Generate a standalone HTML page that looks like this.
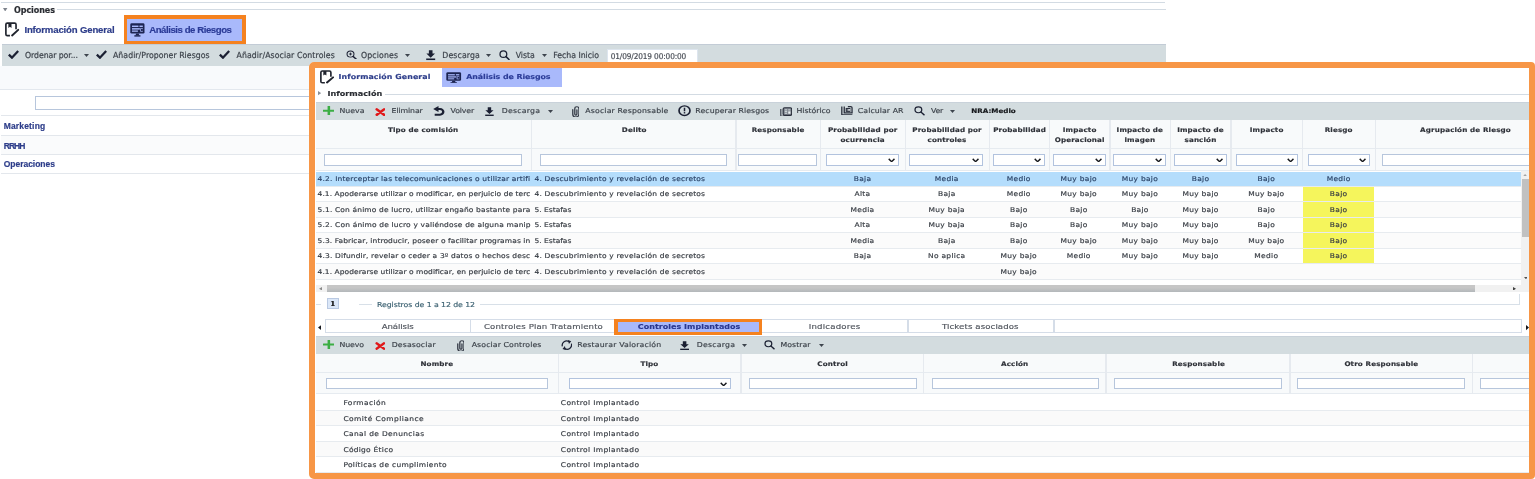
<!DOCTYPE html>
<html lang="es"><head><meta charset="utf-8"><title>Análisis de Riesgos</title><style>html,body{margin:0;padding:0;background:#fff}#r{position:relative;width:1535px;height:479px;overflow:hidden;background:#fff;will-change:transform}#r div,#r svg,#r span{position:absolute;display:block}#r span{white-space:nowrap;overflow:visible;-webkit-text-stroke:0.18px currentColor}#r span i{display:inline-block;width:0;height:0}</style></head><body><div id="r">
<div style="left:1.3px;top:1.5px;width:1164.2px;height:1.2px;background:#d3dbe3;"></div>
<div style="left:57px;top:9.2px;width:1108.5px;height:1.2px;background:#d3dbe3;"></div>
<svg style="left:3.3px;top:7.7px" width="4.4" height="3.5" viewBox="0 0 10 8" preserveAspectRatio="none"><path d="M0 0 H10 L5 8 Z" fill="#7d838c"/></svg>
<span style='left:14px;top:4px;height:13px;font:700 8px/13px "DejaVu Sans", "Liberation Sans", sans-serif;color:#2a2d33;letter-spacing:-0.06px;'>Opciones</span>
<svg style="left:5.4px;top:22px" width="14.2" height="14.6" viewBox="0 0 14.4 14.8" preserveAspectRatio="none"><path d="M11.2 7.4 V2.6 A1.5 1.5 0 0 0 9.7 1.1 H2.4 A1.5 1.5 0 0 0 0.9 2.6 V12.4 A1.5 1.5 0 0 0 2.4 13.9 H5" fill="none" stroke="#20242e" stroke-width="1.7"/><path d="M3.4 1 H6.6 V6 L5 4.8 L3.4 6 Z" fill="#20242e"/><path d="M7.2 13.6 L13.4 8" stroke="#20242e" stroke-width="2" stroke-linecap="round"/></svg>
<span style='left:24.4px;top:22px;height:15px;font:700 9.6px/15px "Liberation Sans", "DejaVu Sans", sans-serif;color:#2d3d8a;letter-spacing:-0.17px;'>Información General</span>
<div style="left:124px;top:15.2px;width:121.7px;height:28.6px;background:#f5821f;"></div>
<div style="left:127.4px;top:18.8px;width:114.8px;height:22px;background:#a9b9fb;"></div>
<svg style="left:130px;top:22.8px" width="14.8" height="13.8" viewBox="0 0 15 14" preserveAspectRatio="none"><rect x="0.3" y="0.3" width="14.4" height="10.4" rx="1.4" fill="#1c2452"/><rect x="2" y="2.6" width="6.6" height="1.5" fill="#a9b9fb"/><rect x="9.6" y="2.6" width="3.4" height="1.5" fill="#a9b9fb"/><rect x="2" y="5.2" width="8" height="1.5" fill="#a9b9fb"/><rect x="2" y="7.6" width="6" height="1.3" fill="#a9b9fb"/><rect x="10.4" y="5.2" width="2.6" height="3.6" fill="#a9b9fb"/><rect x="11.2" y="5.9" width="1.8" height="2.2" fill="#1c2452"/><path d="M6.2 10.6 H8.8 L9.4 12.6 H5.6 Z" fill="#1c2452"/><rect x="4.4" y="12.4" width="6.2" height="1.4" fill="#1c2452"/></svg>
<span style='left:149.2px;top:22px;height:15px;font:700 9.6px/15px "Liberation Sans", "DejaVu Sans", sans-serif;color:#2c3c98;letter-spacing:-0.44px;'>Análisis de Riesgos</span>
<div style="left:1.5px;top:44px;width:1164px;height:22.7px;background:#d3dcdf;border-top:1px solid #c3ccd6;border-bottom:1px solid #c7d0d6;box-sizing:border-box;"></div>
<svg style="left:8px;top:50px" width="11" height="9" viewBox="0 0 12 10" preserveAspectRatio="none"><path d="M0.9 5.2 L4.3 8.5 L11.1 1.2" fill="none" stroke="#1b2033" stroke-width="2.5" stroke-linecap="butt" stroke-linejoin="miter"/></svg>
<span style='left:25px;top:50px;height:12px;font:400 7.8px/12px "DejaVu Sans", "Liberation Sans", sans-serif;color:#3c424a;letter-spacing:-0.08px;transform:scaleY(1.07);transform-origin:0 8px;'>Ordenar por...</span>
<svg style="left:83.9px;top:54.3px" width="5" height="3" viewBox="0 0 10 6" preserveAspectRatio="none"><path d="M0 0 H10 L5 6 Z" fill="#3d444d"/></svg>
<svg style="left:96px;top:50px" width="11" height="9" viewBox="0 0 12 10" preserveAspectRatio="none"><path d="M0.9 5.2 L4.3 8.5 L11.1 1.2" fill="none" stroke="#1b2033" stroke-width="2.5" stroke-linecap="butt" stroke-linejoin="miter"/></svg>
<span style='left:113px;top:50px;height:12px;font:400 7.8px/12px "DejaVu Sans", "Liberation Sans", sans-serif;color:#3c424a;letter-spacing:0.04px;transform:scaleY(1.07);transform-origin:0 8px;'>Añadir/Proponer Riesgos</span>
<svg style="left:218.7px;top:50px" width="11" height="9" viewBox="0 0 12 10" preserveAspectRatio="none"><path d="M0.9 5.2 L4.3 8.5 L11.1 1.2" fill="none" stroke="#1b2033" stroke-width="2.5" stroke-linecap="butt" stroke-linejoin="miter"/></svg>
<span style='left:236.5px;top:50px;height:12px;font:400 7.8px/12px "DejaVu Sans", "Liberation Sans", sans-serif;color:#3c424a;letter-spacing:0.09px;transform:scaleY(1.07);transform-origin:0 8px;'>Añadir/Asociar Controles</span>
<svg style="left:345.7px;top:49.5px" width="11.1" height="9.9" viewBox="0 0 16 16" preserveAspectRatio="none"><circle cx="6.5" cy="6.5" r="5" fill="none" stroke="#1b2033" stroke-width="1.5"/><path d="M10.4 10.4 L14.8 14.8" stroke="#1b2033" stroke-width="2.3" stroke-linecap="round"/><path d="M4.2 6.5 H8.8 M6.5 4.2 V8.8" stroke="#1b2033" stroke-width="1.3"/></svg>
<span style='left:361px;top:50px;height:12px;font:400 7.8px/12px "DejaVu Sans", "Liberation Sans", sans-serif;color:#3c424a;letter-spacing:0.12px;transform:scaleY(1.07);transform-origin:0 8px;'>Opciones</span>
<svg style="left:404.5px;top:54.1px" width="5" height="3" viewBox="0 0 10 6" preserveAspectRatio="none"><path d="M0 0 H10 L5 6 Z" fill="#3d444d"/></svg>
<svg style="left:426.2px;top:50.4px" width="9.4" height="10.2" viewBox="0 0 14 14.4" preserveAspectRatio="none"><path d="M4.3 0.2 H9.7 V5 H13.4 L7 11 L0.6 5 H4.3 Z" fill="#1b2033"/><rect x="0.3" y="12" width="13.4" height="2.2" fill="#1b2033"/></svg>
<span style='left:442.3px;top:50px;height:12px;font:400 7.8px/12px "DejaVu Sans", "Liberation Sans", sans-serif;color:#3c424a;letter-spacing:0.11px;transform:scaleY(1.07);transform-origin:0 8px;'>Descarga</span>
<svg style="left:486.1px;top:54.1px" width="5" height="3" viewBox="0 0 10 6" preserveAspectRatio="none"><path d="M0 0 H10 L5 6 Z" fill="#3d444d"/></svg>
<svg style="left:499px;top:50px" width="10.8" height="10.2" viewBox="0 0 16 16" preserveAspectRatio="none"><circle cx="6.5" cy="6.5" r="5" fill="none" stroke="#1b2033" stroke-width="1.9"/><path d="M10.4 10.4 L14.8 14.8" stroke="#1b2033" stroke-width="2.3" stroke-linecap="round"/></svg>
<span style='left:515.7px;top:50px;height:12px;font:400 7.8px/12px "DejaVu Sans", "Liberation Sans", sans-serif;color:#3c424a;letter-spacing:-0.03px;transform:scaleY(1.07);transform-origin:0 8px;'>Vista</span>
<svg style="left:541.5px;top:54.1px" width="5" height="3" viewBox="0 0 10 6" preserveAspectRatio="none"><path d="M0 0 H10 L5 6 Z" fill="#3d444d"/></svg>
<span style='left:553.2px;top:50px;height:12px;font:400 7.8px/12px "DejaVu Sans", "Liberation Sans", sans-serif;color:#3c424a;letter-spacing:-0.02px;transform:scaleY(1.07);transform-origin:0 8px;'>Fecha Inicio</span>
<div style="left:606.8px;top:49px;width:91.2px;height:15px;box-sizing:border-box;border:1px solid #dde5ee;background:#fff;"></div>
<span style='left:610.7px;top:51px;height:12px;font:400 7.4px/12px "DejaVu Sans", "Liberation Sans", sans-serif;color:#4a4f57;letter-spacing:-0.14px;transform:scaleY(1.07);transform-origin:0 8px;'>01/09/2019 00:00:00</span>
<div style="left:0px;top:66.4px;width:312px;height:22.4px;background:#f8fafc;"></div>
<div style="left:0px;top:88.6px;width:312px;height:1.2px;background:#e3e8ee;"></div>
<div style="left:35px;top:95.8px;width:277px;height:14.6px;box-sizing:border-box;border:1px solid #b7c6dc;background:#fff;"></div>
<div style="left:1.3px;top:135.8px;width:310.7px;height:19px;background:#fafbfc;"></div>
<div style="left:1.3px;top:115.1px;width:310.7px;height:1.4px;background:#e3e7ec;"></div>
<div style="left:1.3px;top:135.1px;width:310.7px;height:1.4px;background:#e3e7ec;"></div>
<div style="left:1.3px;top:154.1px;width:310.7px;height:1.4px;background:#e3e7ec;"></div>
<div style="left:1.3px;top:173px;width:310.7px;height:1.4px;background:#e3e7ec;"></div>
<span style='left:3.7px;top:119px;height:14px;font:700 8.5px/14px "Liberation Sans", "DejaVu Sans", sans-serif;color:#2d3d8a;letter-spacing:0.17px;'>Marketing</span>
<span style='left:3.7px;top:139px;height:14px;font:700 8.5px/14px "Liberation Sans", "DejaVu Sans", sans-serif;color:#2d3d8a;letter-spacing:-0.95px;'>RRHH</span>
<span style='left:3.7px;top:157px;height:14px;font:700 8.5px/14px "Liberation Sans", "DejaVu Sans", sans-serif;color:#2d3d8a;letter-spacing:-0.02px;'>Operaciones</span>
<div style="left:309px;top:61.8px;width:1226px;height:417px;background:#fff;border-radius:5px;"></div>
<svg style="left:319.6px;top:70.4px" width="14" height="13.6" viewBox="0 0 14.4 14.8" preserveAspectRatio="none"><path d="M11.2 7.4 V2.6 A1.5 1.5 0 0 0 9.7 1.1 H2.4 A1.5 1.5 0 0 0 0.9 2.6 V12.4 A1.5 1.5 0 0 0 2.4 13.9 H5" fill="none" stroke="#20242e" stroke-width="1.7"/><path d="M3.4 1 H6.6 V6 L5 4.8 L3.4 6 Z" fill="#20242e"/><path d="M7.2 13.6 L13.4 8" stroke="#20242e" stroke-width="2" stroke-linecap="round"/></svg>
<span style='left:338.6px;top:70px;height:13px;font:700 7.9px/13px "DejaVu Sans", "Liberation Sans", sans-serif;color:#2d3d8a;letter-spacing:0.06px;transform:scaleY(0.87);transform-origin:0 9px;'>Información General</span>
<div style="left:442.3px;top:67.8px;width:119.7px;height:19.2px;background:#a9b9fb;"></div>
<svg style="left:446.4px;top:71.6px" width="15.4" height="11.6" viewBox="0 0 15 14" preserveAspectRatio="none"><rect x="0.3" y="0.3" width="14.4" height="10.4" rx="1.4" fill="#1c2452"/><rect x="2" y="2.6" width="6.6" height="1.5" fill="#a9b9fb"/><rect x="9.6" y="2.6" width="3.4" height="1.5" fill="#a9b9fb"/><rect x="2" y="5.2" width="8" height="1.5" fill="#a9b9fb"/><rect x="2" y="7.6" width="6" height="1.3" fill="#a9b9fb"/><rect x="10.4" y="5.2" width="2.6" height="3.6" fill="#a9b9fb"/><rect x="11.2" y="5.9" width="1.8" height="2.2" fill="#1c2452"/><path d="M6.2 10.6 H8.8 L9.4 12.6 H5.6 Z" fill="#1c2452"/><rect x="4.4" y="12.4" width="6.2" height="1.4" fill="#1c2452"/></svg>
<span style='left:466.3px;top:70px;height:13px;font:700 7.9px/13px "DejaVu Sans", "Liberation Sans", sans-serif;color:#2c3c98;letter-spacing:-0.08px;transform:scaleY(0.87);transform-origin:0 9px;'>Análisis de Riesgos</span>
<svg style="left:317.6px;top:91.4px" width="3.2" height="4.2" viewBox="0 0 8 10" preserveAspectRatio="none"><path d="M0 0 L8 5 L0 10 Z" fill="#8a9098"/></svg>
<span style='left:327.4px;top:87px;height:13px;font:700 8.1px/13px "DejaVu Sans", "Liberation Sans", sans-serif;color:#2a2d33;letter-spacing:0.02px;transform:scaleY(0.87);transform-origin:0 9px;'>Información</span>
<div style="left:384.5px;top:93.6px;width:1144.1px;height:1.2px;background:#d3dbe3;"></div>
<div style="left:315.6px;top:102.2px;width:1213px;height:18.2px;background:#d3dcdf;border-top:1px solid #c9d2da;box-sizing:border-box;"></div>
<svg style="left:322.8px;top:106px" width="11.7" height="9.4" viewBox="0 0 12 12" preserveAspectRatio="none"><path d="M6 0.5 V11.5 M0.5 6 H11.5" stroke="#3cae45" stroke-width="2.6" stroke-linecap="round"/></svg>
<span style='left:339.5px;top:105px;height:12px;font:400 7.8px/12px "DejaVu Sans", "Liberation Sans", sans-serif;color:#3c424a;letter-spacing:0.01px;transform:scaleY(0.87);transform-origin:0 8px;'>Nueva</span>
<svg style="left:374.5px;top:107.6px" width="10.9" height="8.2" viewBox="0 0 12 10" preserveAspectRatio="none"><path d="M2 1.7 L10 8.3 M10 1.7 L2 8.3" stroke="#e0181a" stroke-width="3" stroke-linecap="round"/></svg>
<span style='left:391.6px;top:105px;height:12px;font:400 7.8px/12px "DejaVu Sans", "Liberation Sans", sans-serif;color:#3c424a;letter-spacing:-0.11px;transform:scaleY(0.87);transform-origin:0 8px;'>Eliminar</span>
<svg style="left:432.8px;top:106px" width="11.8" height="9.8" viewBox="0 0 12.5 12.2" preserveAspectRatio="none"><path d="M4 3.8 H7.4 A3.5 3.5 0 0 1 7.4 10.8 H1.8" fill="none" stroke="#1b2033" stroke-width="2.5" stroke-linecap="butt"/><path d="M5.8 0 L0.2 3.8 L5.8 7.6 Z" fill="#1b2033"/></svg>
<span style='left:450.6px;top:105px;height:12px;font:400 7.8px/12px "DejaVu Sans", "Liberation Sans", sans-serif;color:#3c424a;letter-spacing:-0.14px;transform:scaleY(0.87);transform-origin:0 8px;'>Volver</span>
<svg style="left:485.3px;top:106.9px" width="8.9" height="9.1" viewBox="0 0 14 14.4" preserveAspectRatio="none"><path d="M4.3 0.2 H9.7 V5 H13.4 L7 11 L0.6 5 H4.3 Z" fill="#1b2033"/><rect x="0.3" y="12" width="13.4" height="2.2" fill="#1b2033"/></svg>
<span style='left:501.7px;top:105px;height:12px;font:400 7.8px/12px "DejaVu Sans", "Liberation Sans", sans-serif;color:#3c424a;letter-spacing:0.22px;transform:scaleY(0.87);transform-origin:0 8px;'>Descarga</span>
<svg style="left:547.5px;top:109.8px" width="5" height="3" viewBox="0 0 10 6" preserveAspectRatio="none"><path d="M0 0 H10 L5 6 Z" fill="#3d444d"/></svg>
<svg style="left:571.6px;top:105.7px" width="7.7" height="11.6" viewBox="0 0 8 13.2" preserveAspectRatio="none"><path d="M0.8 4.2 V9.4 A3.2 3.2 0 0 0 7.2 9.4 V3 A2.15 2.15 0 0 0 2.9 3 V9.2 A1.1 1.1 0 0 0 5.1 9.2 V4.4" fill="none" stroke="#343a46" stroke-width="1.35" stroke-linecap="round"/></svg>
<span style='left:585.3px;top:105px;height:12px;font:400 7.8px/12px "DejaVu Sans", "Liberation Sans", sans-serif;color:#3c424a;letter-spacing:0.15px;transform:scaleY(0.87);transform-origin:0 8px;'>Asociar Responsable</span>
<svg style="left:678.1px;top:105.3px" width="13" height="11.3" viewBox="0 0 14 14" preserveAspectRatio="none"><circle cx="7" cy="7" r="5.9" fill="none" stroke="#1b2033" stroke-width="1.8"/><rect x="6.2" y="3.4" width="1.6" height="4.4" fill="#1b2033"/><rect x="6.2" y="8.8" width="1.6" height="1.7" fill="#1b2033"/></svg>
<span style='left:695.3px;top:105px;height:12px;font:400 7.8px/12px "DejaVu Sans", "Liberation Sans", sans-serif;color:#3c424a;letter-spacing:0.07px;transform:scaleY(0.87);transform-origin:0 8px;'>Recuperar Riesgos</span>
<svg style="left:779.6px;top:106.6px" width="12.4" height="9.8" viewBox="0 0 15 12.5" preserveAspectRatio="none"><path d="M1 2.4 V11.6" stroke="#2a2f3c" stroke-width="1.3" fill="none"/><rect x="3.8" y="1" width="10.4" height="9.6" rx="1.8" fill="#7f868f" stroke="#2a2f3c" stroke-width="1.5"/><path d="M5.8 3.7 H8.6 M10 3.7 H12.4 M5.8 5.9 H8.6 M5.8 8 H8.6" stroke="#dde4e7" stroke-width="1.1"/><rect x="10" y="5.6" width="2.6" height="3" fill="#eef2f4"/><path d="M1.6 11.7 H11.4" stroke="#2a2f3c" stroke-width="1.3"/></svg>
<span style='left:796.4px;top:105px;height:12px;font:400 7.8px/12px "DejaVu Sans", "Liberation Sans", sans-serif;color:#3c424a;letter-spacing:-0.02px;transform:scaleY(0.87);transform-origin:0 8px;'>Histórico</span>
<svg style="left:840.6px;top:105.9px" width="12.2" height="9.6" viewBox="0 0 15 12.5" preserveAspectRatio="none"><path d="M1 0.6 V11.6 H14" fill="none" stroke="#2a2f3c" stroke-width="1.6"/><path d="M4 0.6 V9 H13.6 V2.4 A1.6 1.6 0 0 0 12 0.8 H8.4" fill="none" stroke="#2a2f3c" stroke-width="1.6"/><rect x="6.4" y="3.2" width="4.6" height="3.8" fill="#6f7680" stroke="#2a2f3c" stroke-width="1.3"/><rect x="9" y="4.2" width="2.4" height="1.8" fill="#eef2f4"/></svg>
<span style='left:857.8px;top:105px;height:12px;font:400 7.8px/12px "DejaVu Sans", "Liberation Sans", sans-serif;color:#3c424a;letter-spacing:0.07px;transform:scaleY(0.87);transform-origin:0 8px;'>Calcular AR</span>
<svg style="left:914px;top:106.2px" width="10.8" height="9.4" viewBox="0 0 16 16" preserveAspectRatio="none"><circle cx="6.5" cy="6.5" r="5" fill="none" stroke="#1b2033" stroke-width="1.9"/><path d="M10.4 10.4 L14.8 14.8" stroke="#1b2033" stroke-width="2.3" stroke-linecap="round"/></svg>
<span style='left:931px;top:105px;height:12px;font:400 7.8px/12px "DejaVu Sans", "Liberation Sans", sans-serif;color:#3c424a;letter-spacing:-0.22px;transform:scaleY(0.87);transform-origin:0 8px;'>Ver</span>
<svg style="left:950.2px;top:109.8px" width="5" height="3" viewBox="0 0 10 6" preserveAspectRatio="none"><path d="M0 0 H10 L5 6 Z" fill="#3d444d"/></svg>
<span style='left:971.3px;top:105px;height:12px;font:700 7.2px/12px "DejaVu Sans", "Liberation Sans", sans-serif;color:#15171b;letter-spacing:-0.03px;transform:scaleY(0.87);transform-origin:0 8px;'>NRA:Medio</span>
<div style="left:315.6px;top:120px;width:1213px;height:50.4px;background:#f8fafb;"></div>
<div style="left:315.6px;top:147.9px;width:1213px;height:1.2px;background:#e6ebf0;"></div>
<div style="left:315.6px;top:170px;width:1213px;height:1.2px;background:#e6ebf0;"></div>
<div style="left:531.05px;top:120.4px;width:1.1px;height:50px;background:#e6eaef;"></div>
<div style="left:735.45px;top:120.4px;width:1.1px;height:50px;background:#e6eaef;"></div>
<div style="left:820.05px;top:120.4px;width:1.1px;height:50px;background:#e6eaef;"></div>
<div style="left:904.85px;top:120.4px;width:1.1px;height:50px;background:#e6eaef;"></div>
<div style="left:989.15px;top:120.4px;width:1.1px;height:50px;background:#e6eaef;"></div>
<div style="left:1049.15px;top:120.4px;width:1.1px;height:50px;background:#e6eaef;"></div>
<div style="left:1109.45px;top:120.4px;width:1.1px;height:50px;background:#e6eaef;"></div>
<div style="left:1169.95px;top:120.4px;width:1.1px;height:50px;background:#e6eaef;"></div>
<div style="left:1230.45px;top:120.4px;width:1.1px;height:50px;background:#e6eaef;"></div>
<div style="left:1302.05px;top:120.4px;width:1.1px;height:50px;background:#e6eaef;"></div>
<div style="left:1374.85px;top:120.4px;width:1.1px;height:50px;background:#e6eaef;"></div>
<span style='left:387.99px;top:124px;height:12px;font:700 7.2px/12px "DejaVu Sans", "Liberation Sans", sans-serif;color:#2e3138;letter-spacing:0.12px;transform:scaleY(0.87);transform-origin:0 8px;'>Tipo de comisión</span>
<span style='left:621.82px;top:124px;height:12px;font:700 7.2px/12px "DejaVu Sans", "Liberation Sans", sans-serif;color:#2e3138;letter-spacing:0.12px;transform:scaleY(0.87);transform-origin:0 8px;'>Delito</span>
<span style='left:751.65px;top:124px;height:12px;font:700 7.2px/12px "DejaVu Sans", "Liberation Sans", sans-serif;color:#2e3138;letter-spacing:0.12px;transform:scaleY(0.87);transform-origin:0 8px;'>Responsable</span>
<span style='left:827.92px;top:124px;height:12px;font:700 7.2px/12px "DejaVu Sans", "Liberation Sans", sans-serif;color:#2e3138;letter-spacing:0.12px;transform:scaleY(0.87);transform-origin:0 8px;'>Probabilidad por</span>
<span style='left:840.57px;top:134px;height:12px;font:700 7.2px/12px "DejaVu Sans", "Liberation Sans", sans-serif;color:#2e3138;letter-spacing:0.12px;transform:scaleY(0.87);transform-origin:0 8px;'>ocurrencia</span>
<span style='left:912.32px;top:124px;height:12px;font:700 7.2px/12px "DejaVu Sans", "Liberation Sans", sans-serif;color:#2e3138;letter-spacing:0.12px;transform:scaleY(0.87);transform-origin:0 8px;'>Probabilidad por</span>
<span style='left:927.59px;top:134px;height:12px;font:700 7.2px/12px "DejaVu Sans", "Liberation Sans", sans-serif;color:#2e3138;letter-spacing:0.12px;transform:scaleY(0.87);transform-origin:0 8px;'>controles</span>
<span style='left:993.13px;top:124px;height:12px;font:700 7.2px/12px "DejaVu Sans", "Liberation Sans", sans-serif;color:#2e3138;letter-spacing:0.12px;transform:scaleY(0.87);transform-origin:0 8px;'>Probabilidad</span>
<span style='left:1062.84px;top:124px;height:12px;font:700 7.2px/12px "DejaVu Sans", "Liberation Sans", sans-serif;color:#2e3138;letter-spacing:0.12px;transform:scaleY(0.87);transform-origin:0 8px;'>Impacto</span>
<span style='left:1054.69px;top:134px;height:12px;font:700 7.2px/12px "DejaVu Sans", "Liberation Sans", sans-serif;color:#2e3138;letter-spacing:0.12px;transform:scaleY(0.87);transform-origin:0 8px;'>Operacional</span>
<span style='left:1116.6px;top:124px;height:12px;font:700 7.2px/12px "DejaVu Sans", "Liberation Sans", sans-serif;color:#2e3138;letter-spacing:0.12px;transform:scaleY(0.87);transform-origin:0 8px;'>Impacto de</span>
<span style='left:1124.52px;top:134px;height:12px;font:700 7.2px/12px "DejaVu Sans", "Liberation Sans", sans-serif;color:#2e3138;letter-spacing:0.12px;transform:scaleY(0.87);transform-origin:0 8px;'>imagen</span>
<span style='left:1177.2px;top:124px;height:12px;font:700 7.2px/12px "DejaVu Sans", "Liberation Sans", sans-serif;color:#2e3138;letter-spacing:0.12px;transform:scaleY(0.87);transform-origin:0 8px;'>Impacto de</span>
<span style='left:1184.52px;top:134px;height:12px;font:700 7.2px/12px "DejaVu Sans", "Liberation Sans", sans-serif;color:#2e3138;letter-spacing:0.12px;transform:scaleY(0.87);transform-origin:0 8px;'>sanción</span>
<span style='left:1249.84px;top:124px;height:12px;font:700 7.2px/12px "DejaVu Sans", "Liberation Sans", sans-serif;color:#2e3138;letter-spacing:0.12px;transform:scaleY(0.87);transform-origin:0 8px;'>Impacto</span>
<span style='left:1324.68px;top:124px;height:12px;font:700 7.2px/12px "DejaVu Sans", "Liberation Sans", sans-serif;color:#2e3138;letter-spacing:0.12px;transform:scaleY(0.87);transform-origin:0 8px;'>Riesgo</span>
<span style='left:1420.06px;top:124px;height:12px;font:700 7.2px/12px "DejaVu Sans", "Liberation Sans", sans-serif;color:#2e3138;letter-spacing:0.12px;transform:scaleY(0.87);transform-origin:0 8px;'>Agrupación de Riesgo</span>
<div style="left:324px;top:154px;width:198.2px;height:11.6px;box-sizing:border-box;border:1px solid #b7c6dc;background:#fff;"></div>
<div style="left:539.8px;top:154px;width:186.8px;height:11.6px;box-sizing:border-box;border:1px solid #b7c6dc;background:#fff;"></div>
<div style="left:738.4px;top:154px;width:79px;height:11.6px;box-sizing:border-box;border:1px solid #b7c6dc;background:#fff;"></div>
<div style="left:825.8px;top:154px;width:73.2px;height:11.6px;box-sizing:border-box;border:1px solid #b2c3de;background:#fff;"></div>
<svg style="left:888px;top:157.9px" width="7.2" height="4.4" viewBox="0 0 10 6" preserveAspectRatio="none"><path d="M1 1.2 L5 5 L9 1.2" fill="none" stroke="#16181d" stroke-width="1.9"/></svg>
<div style="left:909.4px;top:154px;width:74px;height:11.6px;box-sizing:border-box;border:1px solid #b2c3de;background:#fff;"></div>
<svg style="left:972.4px;top:157.9px" width="7.2" height="4.4" viewBox="0 0 10 6" preserveAspectRatio="none"><path d="M1 1.2 L5 5 L9 1.2" fill="none" stroke="#16181d" stroke-width="1.9"/></svg>
<div style="left:992.8px;top:154px;width:52.2px;height:11.6px;box-sizing:border-box;border:1px solid #b2c3de;background:#fff;"></div>
<svg style="left:1034px;top:157.9px" width="7.2" height="4.4" viewBox="0 0 10 6" preserveAspectRatio="none"><path d="M1 1.2 L5 5 L9 1.2" fill="none" stroke="#16181d" stroke-width="1.9"/></svg>
<div style="left:1053px;top:154px;width:52.8px;height:11.6px;box-sizing:border-box;border:1px solid #b2c3de;background:#fff;"></div>
<svg style="left:1094.8px;top:157.9px" width="7.2" height="4.4" viewBox="0 0 10 6" preserveAspectRatio="none"><path d="M1 1.2 L5 5 L9 1.2" fill="none" stroke="#16181d" stroke-width="1.9"/></svg>
<div style="left:1113.3px;top:154px;width:53.1px;height:11.6px;box-sizing:border-box;border:1px solid #b2c3de;background:#fff;"></div>
<svg style="left:1155.4px;top:157.9px" width="7.2" height="4.4" viewBox="0 0 10 6" preserveAspectRatio="none"><path d="M1 1.2 L5 5 L9 1.2" fill="none" stroke="#16181d" stroke-width="1.9"/></svg>
<div style="left:1173.8px;top:154px;width:52.9px;height:11.6px;box-sizing:border-box;border:1px solid #b2c3de;background:#fff;"></div>
<svg style="left:1215.7px;top:157.9px" width="7.2" height="4.4" viewBox="0 0 10 6" preserveAspectRatio="none"><path d="M1 1.2 L5 5 L9 1.2" fill="none" stroke="#16181d" stroke-width="1.9"/></svg>
<div style="left:1235.6px;top:154px;width:62.1px;height:11.6px;box-sizing:border-box;border:1px solid #b2c3de;background:#fff;"></div>
<svg style="left:1286.7px;top:157.9px" width="7.2" height="4.4" viewBox="0 0 10 6" preserveAspectRatio="none"><path d="M1 1.2 L5 5 L9 1.2" fill="none" stroke="#16181d" stroke-width="1.9"/></svg>
<div style="left:1307.6px;top:154px;width:62.8px;height:11.6px;box-sizing:border-box;border:1px solid #b2c3de;background:#fff;"></div>
<svg style="left:1359.4px;top:157.9px" width="7.2" height="4.4" viewBox="0 0 10 6" preserveAspectRatio="none"><path d="M1 1.2 L5 5 L9 1.2" fill="none" stroke="#16181d" stroke-width="1.9"/></svg>
<div style="left:1382px;top:154px;width:178px;height:11.6px;box-sizing:border-box;border:1px solid #b7c6dc;background:#fff;"></div>
<div style="left:315.6px;top:171.5px;width:1205.4px;height:14.5px;background:#b4ddfc;"></div>
<div style="left:315.6px;top:202.2px;width:1205.4px;height:15.5px;background:#fbfbfb;"></div>
<div style="left:315.6px;top:233.2px;width:1205.4px;height:15.5px;background:#fbfbfb;"></div>
<div style="left:315.6px;top:264.2px;width:1205.4px;height:15.5px;background:#fbfbfb;"></div>
<div style="left:1303.2px;top:186.6px;width:71.2px;height:77px;background:#f5f55c;"></div>
<div style="left:315.6px;top:185.8px;width:1205.4px;height:1.2px;background:#e7ebef;"></div>
<div style="left:315.6px;top:201.3px;width:1205.4px;height:1.2px;background:#e7ebef;"></div>
<div style="left:315.6px;top:216.8px;width:1205.4px;height:1.2px;background:#e7ebef;"></div>
<div style="left:315.6px;top:232.3px;width:1205.4px;height:1.2px;background:#e7ebef;"></div>
<div style="left:315.6px;top:247.8px;width:1205.4px;height:1.2px;background:#e7ebef;"></div>
<div style="left:315.6px;top:263.3px;width:1205.4px;height:1.2px;background:#e7ebef;"></div>
<div style="left:315.6px;top:278.8px;width:1205.4px;height:1.2px;background:#e7ebef;"></div>
<span style='left:317.6px;top:173px;height:12px;font:400 7.5px/12px "DejaVu Sans", "Liberation Sans", sans-serif;color:#2b4468;letter-spacing:0.17px;transform:scaleY(0.87);transform-origin:0 8px;'>4.2. Interceptar las telecomunicaciones o utilizar artifi</span>
<span style='left:534.5px;top:173px;height:12px;font:400 7.5px/12px "DejaVu Sans", "Liberation Sans", sans-serif;color:#2b4468;letter-spacing:0.19px;transform:scaleY(0.87);transform-origin:0 8px;'>4. Descubrimiento y revelación de secretos</span>
<span style='left:853.77px;top:173px;height:12px;font:400 7.5px/12px "DejaVu Sans", "Liberation Sans", sans-serif;color:#2b4468;letter-spacing:0.28px;transform:scaleY(0.87);transform-origin:0 8px;'>Baja</span>
<span style='left:934.77px;top:173px;height:12px;font:400 7.5px/12px "DejaVu Sans", "Liberation Sans", sans-serif;color:#2b4468;letter-spacing:0.28px;transform:scaleY(0.87);transform-origin:0 8px;'>Media</span>
<span style='left:1006.77px;top:173px;height:12px;font:400 7.5px/12px "DejaVu Sans", "Liberation Sans", sans-serif;color:#2b4468;letter-spacing:0.28px;transform:scaleY(0.87);transform-origin:0 8px;'>Medio</span>
<span style='left:1060.58px;top:173px;height:12px;font:400 7.5px/12px "DejaVu Sans", "Liberation Sans", sans-serif;color:#2b4468;letter-spacing:0.28px;transform:scaleY(0.87);transform-origin:0 8px;'>Muy bajo</span>
<span style='left:1121.78px;top:173px;height:12px;font:400 7.5px/12px "DejaVu Sans", "Liberation Sans", sans-serif;color:#2b4468;letter-spacing:0.28px;transform:scaleY(0.87);transform-origin:0 8px;'>Muy bajo</span>
<span style='left:1191.77px;top:173px;height:12px;font:400 7.5px/12px "DejaVu Sans", "Liberation Sans", sans-serif;color:#2b4468;letter-spacing:0.28px;transform:scaleY(0.87);transform-origin:0 8px;'>Bajo</span>
<span style='left:1257.57px;top:173px;height:12px;font:400 7.5px/12px "DejaVu Sans", "Liberation Sans", sans-serif;color:#2b4468;letter-spacing:0.28px;transform:scaleY(0.87);transform-origin:0 8px;'>Bajo</span>
<span style='left:1326.67px;top:173px;height:12px;font:400 7.5px/12px "DejaVu Sans", "Liberation Sans", sans-serif;color:#2b4468;letter-spacing:0.28px;transform:scaleY(0.87);transform-origin:0 8px;'>Medio</span>
<span style='left:317.6px;top:188px;height:12px;font:400 7.5px/12px "DejaVu Sans", "Liberation Sans", sans-serif;color:#363b42;letter-spacing:0.05px;transform:scaleY(0.87);transform-origin:0 8px;'>4.1. Apoderarse utilizar o modificar, en perjuicio de terc</span>
<span style='left:534.5px;top:188px;height:12px;font:400 7.5px/12px "DejaVu Sans", "Liberation Sans", sans-serif;color:#363b42;letter-spacing:0.19px;transform:scaleY(0.87);transform-origin:0 8px;'>4. Descubrimiento y revelación de secretos</span>
<span style='left:854.6px;top:188px;height:12px;font:400 7.5px/12px "DejaVu Sans", "Liberation Sans", sans-serif;color:#363b42;letter-spacing:0.28px;transform:scaleY(0.87);transform-origin:0 8px;'>Alta</span>
<span style='left:937.97px;top:188px;height:12px;font:400 7.5px/12px "DejaVu Sans", "Liberation Sans", sans-serif;color:#363b42;letter-spacing:0.28px;transform:scaleY(0.87);transform-origin:0 8px;'>Baja</span>
<span style='left:1006.77px;top:188px;height:12px;font:400 7.5px/12px "DejaVu Sans", "Liberation Sans", sans-serif;color:#363b42;letter-spacing:0.28px;transform:scaleY(0.87);transform-origin:0 8px;'>Medio</span>
<span style='left:1060.58px;top:188px;height:12px;font:400 7.5px/12px "DejaVu Sans", "Liberation Sans", sans-serif;color:#363b42;letter-spacing:0.28px;transform:scaleY(0.87);transform-origin:0 8px;'>Muy bajo</span>
<span style='left:1121.78px;top:188px;height:12px;font:400 7.5px/12px "DejaVu Sans", "Liberation Sans", sans-serif;color:#363b42;letter-spacing:0.28px;transform:scaleY(0.87);transform-origin:0 8px;'>Muy bajo</span>
<span style='left:1182.38px;top:188px;height:12px;font:400 7.5px/12px "DejaVu Sans", "Liberation Sans", sans-serif;color:#363b42;letter-spacing:0.28px;transform:scaleY(0.87);transform-origin:0 8px;'>Muy bajo</span>
<span style='left:1248.18px;top:188px;height:12px;font:400 7.5px/12px "DejaVu Sans", "Liberation Sans", sans-serif;color:#363b42;letter-spacing:0.28px;transform:scaleY(0.87);transform-origin:0 8px;'>Muy bajo</span>
<span style='left:1329.87px;top:188px;height:12px;font:400 7.5px/12px "DejaVu Sans", "Liberation Sans", sans-serif;color:#363b42;letter-spacing:0.28px;transform:scaleY(0.87);transform-origin:0 8px;'>Bajo</span>
<span style='left:317.6px;top:204px;height:12px;font:400 7.5px/12px "DejaVu Sans", "Liberation Sans", sans-serif;color:#363b42;letter-spacing:0.14px;transform:scaleY(0.87);transform-origin:0 8px;'>5.1. Con ánimo de lucro, utilizar engaño bastante para</span>
<span style='left:534.5px;top:204px;height:12px;font:400 7.5px/12px "DejaVu Sans", "Liberation Sans", sans-serif;color:#363b42;letter-spacing:0px;transform:scaleY(0.87);transform-origin:0 8px;'>5. Estafas</span>
<span style='left:850.57px;top:204px;height:12px;font:400 7.5px/12px "DejaVu Sans", "Liberation Sans", sans-serif;color:#363b42;letter-spacing:0.28px;transform:scaleY(0.87);transform-origin:0 8px;'>Media</span>
<span style='left:928.57px;top:204px;height:12px;font:400 7.5px/12px "DejaVu Sans", "Liberation Sans", sans-serif;color:#363b42;letter-spacing:0.28px;transform:scaleY(0.87);transform-origin:0 8px;'>Muy baja</span>
<span style='left:1009.97px;top:204px;height:12px;font:400 7.5px/12px "DejaVu Sans", "Liberation Sans", sans-serif;color:#363b42;letter-spacing:0.28px;transform:scaleY(0.87);transform-origin:0 8px;'>Bajo</span>
<span style='left:1069.97px;top:204px;height:12px;font:400 7.5px/12px "DejaVu Sans", "Liberation Sans", sans-serif;color:#363b42;letter-spacing:0.28px;transform:scaleY(0.87);transform-origin:0 8px;'>Bajo</span>
<span style='left:1131.17px;top:204px;height:12px;font:400 7.5px/12px "DejaVu Sans", "Liberation Sans", sans-serif;color:#363b42;letter-spacing:0.28px;transform:scaleY(0.87);transform-origin:0 8px;'>Bajo</span>
<span style='left:1182.38px;top:204px;height:12px;font:400 7.5px/12px "DejaVu Sans", "Liberation Sans", sans-serif;color:#363b42;letter-spacing:0.28px;transform:scaleY(0.87);transform-origin:0 8px;'>Muy bajo</span>
<span style='left:1257.57px;top:204px;height:12px;font:400 7.5px/12px "DejaVu Sans", "Liberation Sans", sans-serif;color:#363b42;letter-spacing:0.28px;transform:scaleY(0.87);transform-origin:0 8px;'>Bajo</span>
<span style='left:1329.87px;top:204px;height:12px;font:400 7.5px/12px "DejaVu Sans", "Liberation Sans", sans-serif;color:#363b42;letter-spacing:0.28px;transform:scaleY(0.87);transform-origin:0 8px;'>Bajo</span>
<span style='left:317.6px;top:219px;height:12px;font:400 7.5px/12px "DejaVu Sans", "Liberation Sans", sans-serif;color:#363b42;letter-spacing:0.16px;transform:scaleY(0.87);transform-origin:0 8px;'>5.2. Con ánimo de lucro y valiéndose de alguna manip</span>
<span style='left:534.5px;top:219px;height:12px;font:400 7.5px/12px "DejaVu Sans", "Liberation Sans", sans-serif;color:#363b42;letter-spacing:0px;transform:scaleY(0.87);transform-origin:0 8px;'>5. Estafas</span>
<span style='left:854.6px;top:219px;height:12px;font:400 7.5px/12px "DejaVu Sans", "Liberation Sans", sans-serif;color:#363b42;letter-spacing:0.28px;transform:scaleY(0.87);transform-origin:0 8px;'>Alta</span>
<span style='left:928.57px;top:219px;height:12px;font:400 7.5px/12px "DejaVu Sans", "Liberation Sans", sans-serif;color:#363b42;letter-spacing:0.28px;transform:scaleY(0.87);transform-origin:0 8px;'>Muy baja</span>
<span style='left:1009.97px;top:219px;height:12px;font:400 7.5px/12px "DejaVu Sans", "Liberation Sans", sans-serif;color:#363b42;letter-spacing:0.28px;transform:scaleY(0.87);transform-origin:0 8px;'>Bajo</span>
<span style='left:1069.97px;top:219px;height:12px;font:400 7.5px/12px "DejaVu Sans", "Liberation Sans", sans-serif;color:#363b42;letter-spacing:0.28px;transform:scaleY(0.87);transform-origin:0 8px;'>Bajo</span>
<span style='left:1121.78px;top:219px;height:12px;font:400 7.5px/12px "DejaVu Sans", "Liberation Sans", sans-serif;color:#363b42;letter-spacing:0.28px;transform:scaleY(0.87);transform-origin:0 8px;'>Muy bajo</span>
<span style='left:1182.38px;top:219px;height:12px;font:400 7.5px/12px "DejaVu Sans", "Liberation Sans", sans-serif;color:#363b42;letter-spacing:0.28px;transform:scaleY(0.87);transform-origin:0 8px;'>Muy bajo</span>
<span style='left:1257.57px;top:219px;height:12px;font:400 7.5px/12px "DejaVu Sans", "Liberation Sans", sans-serif;color:#363b42;letter-spacing:0.28px;transform:scaleY(0.87);transform-origin:0 8px;'>Bajo</span>
<span style='left:1329.87px;top:219px;height:12px;font:400 7.5px/12px "DejaVu Sans", "Liberation Sans", sans-serif;color:#363b42;letter-spacing:0.28px;transform:scaleY(0.87);transform-origin:0 8px;'>Bajo</span>
<span style='left:317.6px;top:235px;height:12px;font:400 7.5px/12px "DejaVu Sans", "Liberation Sans", sans-serif;color:#363b42;letter-spacing:0.09px;transform:scaleY(0.87);transform-origin:0 8px;'>5.3. Fabricar, introducir, poseer o facilitar programas in</span>
<span style='left:534.5px;top:235px;height:12px;font:400 7.5px/12px "DejaVu Sans", "Liberation Sans", sans-serif;color:#363b42;letter-spacing:0px;transform:scaleY(0.87);transform-origin:0 8px;'>5. Estafas</span>
<span style='left:850.57px;top:235px;height:12px;font:400 7.5px/12px "DejaVu Sans", "Liberation Sans", sans-serif;color:#363b42;letter-spacing:0.28px;transform:scaleY(0.87);transform-origin:0 8px;'>Media</span>
<span style='left:937.97px;top:235px;height:12px;font:400 7.5px/12px "DejaVu Sans", "Liberation Sans", sans-serif;color:#363b42;letter-spacing:0.28px;transform:scaleY(0.87);transform-origin:0 8px;'>Baja</span>
<span style='left:1009.97px;top:235px;height:12px;font:400 7.5px/12px "DejaVu Sans", "Liberation Sans", sans-serif;color:#363b42;letter-spacing:0.28px;transform:scaleY(0.87);transform-origin:0 8px;'>Bajo</span>
<span style='left:1060.58px;top:235px;height:12px;font:400 7.5px/12px "DejaVu Sans", "Liberation Sans", sans-serif;color:#363b42;letter-spacing:0.28px;transform:scaleY(0.87);transform-origin:0 8px;'>Muy bajo</span>
<span style='left:1121.78px;top:235px;height:12px;font:400 7.5px/12px "DejaVu Sans", "Liberation Sans", sans-serif;color:#363b42;letter-spacing:0.28px;transform:scaleY(0.87);transform-origin:0 8px;'>Muy bajo</span>
<span style='left:1182.38px;top:235px;height:12px;font:400 7.5px/12px "DejaVu Sans", "Liberation Sans", sans-serif;color:#363b42;letter-spacing:0.28px;transform:scaleY(0.87);transform-origin:0 8px;'>Muy bajo</span>
<span style='left:1248.18px;top:235px;height:12px;font:400 7.5px/12px "DejaVu Sans", "Liberation Sans", sans-serif;color:#363b42;letter-spacing:0.28px;transform:scaleY(0.87);transform-origin:0 8px;'>Muy bajo</span>
<span style='left:1329.87px;top:235px;height:12px;font:400 7.5px/12px "DejaVu Sans", "Liberation Sans", sans-serif;color:#363b42;letter-spacing:0.28px;transform:scaleY(0.87);transform-origin:0 8px;'>Bajo</span>
<span style='left:317.6px;top:250px;height:12px;font:400 7.5px/12px "DejaVu Sans", "Liberation Sans", sans-serif;color:#363b42;letter-spacing:0.14px;transform:scaleY(0.87);transform-origin:0 8px;'>4.3. Difundir, revelar o ceder a 3º datos o hechos desc</span>
<span style='left:534.5px;top:250px;height:12px;font:400 7.5px/12px "DejaVu Sans", "Liberation Sans", sans-serif;color:#363b42;letter-spacing:0.19px;transform:scaleY(0.87);transform-origin:0 8px;'>4. Descubrimiento y revelación de secretos</span>
<span style='left:853.77px;top:250px;height:12px;font:400 7.5px/12px "DejaVu Sans", "Liberation Sans", sans-serif;color:#363b42;letter-spacing:0.28px;transform:scaleY(0.87);transform-origin:0 8px;'>Baja</span>
<span style='left:928.07px;top:250px;height:12px;font:400 7.5px/12px "DejaVu Sans", "Liberation Sans", sans-serif;color:#363b42;letter-spacing:0.28px;transform:scaleY(0.87);transform-origin:0 8px;'>No aplica</span>
<span style='left:1000.58px;top:250px;height:12px;font:400 7.5px/12px "DejaVu Sans", "Liberation Sans", sans-serif;color:#363b42;letter-spacing:0.28px;transform:scaleY(0.87);transform-origin:0 8px;'>Muy bajo</span>
<span style='left:1066.77px;top:250px;height:12px;font:400 7.5px/12px "DejaVu Sans", "Liberation Sans", sans-serif;color:#363b42;letter-spacing:0.28px;transform:scaleY(0.87);transform-origin:0 8px;'>Medio</span>
<span style='left:1121.78px;top:250px;height:12px;font:400 7.5px/12px "DejaVu Sans", "Liberation Sans", sans-serif;color:#363b42;letter-spacing:0.28px;transform:scaleY(0.87);transform-origin:0 8px;'>Muy bajo</span>
<span style='left:1182.38px;top:250px;height:12px;font:400 7.5px/12px "DejaVu Sans", "Liberation Sans", sans-serif;color:#363b42;letter-spacing:0.28px;transform:scaleY(0.87);transform-origin:0 8px;'>Muy bajo</span>
<span style='left:1254.37px;top:250px;height:12px;font:400 7.5px/12px "DejaVu Sans", "Liberation Sans", sans-serif;color:#363b42;letter-spacing:0.28px;transform:scaleY(0.87);transform-origin:0 8px;'>Medio</span>
<span style='left:1329.87px;top:250px;height:12px;font:400 7.5px/12px "DejaVu Sans", "Liberation Sans", sans-serif;color:#363b42;letter-spacing:0.28px;transform:scaleY(0.87);transform-origin:0 8px;'>Bajo</span>
<span style='left:317.6px;top:266px;height:12px;font:400 7.5px/12px "DejaVu Sans", "Liberation Sans", sans-serif;color:#363b42;letter-spacing:0.05px;transform:scaleY(0.87);transform-origin:0 8px;'>4.1. Apoderarse utilizar o modificar, en perjuicio de terc</span>
<span style='left:534.5px;top:266px;height:12px;font:400 7.5px/12px "DejaVu Sans", "Liberation Sans", sans-serif;color:#363b42;letter-spacing:0.19px;transform:scaleY(0.87);transform-origin:0 8px;'>4. Descubrimiento y revelación de secretos</span>
<span style='left:1000.58px;top:266px;height:12px;font:400 7.5px/12px "DejaVu Sans", "Liberation Sans", sans-serif;color:#363b42;letter-spacing:0.28px;transform:scaleY(0.87);transform-origin:0 8px;'>Muy bajo</span>
<div style="left:1521px;top:171.4px;width:9px;height:113.2px;background:#f1f1f1;"></div>
<div style="left:1522.2px;top:179.4px;width:7.8px;height:57.4px;background:#c1c1c1;"></div>
<svg style="left:1523.4px;top:174px" width="4.2" height="2.4" viewBox="0 0 10 6" preserveAspectRatio="none"><path d="M0 6 L5 0 L10 6 Z" fill="#a3a3a3"/></svg>
<svg style="left:1523.6px;top:277.2px" width="3.8" height="2.2" viewBox="0 0 10 6" preserveAspectRatio="none"><path d="M0 0 L5 6 L10 0 Z" fill="#505050"/></svg>
<div style="left:315.6px;top:284.6px;width:1214.4px;height:7.8px;background:#f1f1f1;"></div>
<div style="left:326.8px;top:285px;width:1148.2px;height:7.2px;background:#c1c1c1;background:linear-gradient(#c6c6c6 40%,#b3b7ba);"></div>
<svg style="left:319px;top:286.8px" width="3.2" height="3.6" viewBox="0 0 6 10" preserveAspectRatio="none"><path d="M6 0 L0 5 L6 10 Z" fill="#8a8a8a"/></svg>
<svg style="left:1513.4px;top:286.8px" width="3" height="3.6" viewBox="0 0 6 10" preserveAspectRatio="none"><path d="M0 0 L6 5 L0 10 Z" fill="#404040"/></svg>
<div style="left:315.6px;top:304.1px;width:5.4px;height:1px;background:#d8e0e8;"></div>
<div style="left:358.6px;top:304.1px;width:13.8px;height:1px;background:#d8e0e8;"></div>
<div style="left:479.5px;top:304.1px;width:1040.5px;height:1px;background:#d8e0e8;"></div>
<div style="left:1519.3px;top:294px;width:1px;height:11px;background:#d8e0e8;"></div>
<div style="left:327px;top:298px;width:11.8px;height:10.6px;box-sizing:border-box;border:1px solid #b9c9e2;background:#dbe7f8;"></div>
<span style='left:330.11px;top:297px;height:13px;font:700 8px/13px "DejaVu Serif", "Liberation Serif", serif;color:#111;letter-spacing:0px;transform:scaleY(0.87);transform-origin:0 9px;'>1</span>
<span style='left:377px;top:299px;height:12px;font:400 7.8px/12px "DejaVu Sans", sans-serif;color:#3d6272;letter-spacing:-0.08px;transform:scaleY(0.87);transform-origin:0 8px;'>Registros de 1 a 12 de 12</span>
<div style="left:325.2px;top:319.4px;width:1196.6px;height:13.8px;box-sizing:border-box;border:1px solid #d5dde8;background:#fff;"></div>
<div style="left:469.7px;top:319.4px;width:1.2px;height:13.8px;background:#d5dde8;"></div>
<div style="left:613.9px;top:319.4px;width:1.2px;height:13.8px;background:#d5dde8;"></div>
<div style="left:907.4px;top:319.4px;width:1.2px;height:13.8px;background:#d5dde8;"></div>
<div style="left:1053.4px;top:319.4px;width:1.2px;height:13.8px;background:#d5dde8;"></div>
<svg style="left:318.2px;top:325.4px" width="3.2" height="5.2" viewBox="0 0 6 10" preserveAspectRatio="none"><path d="M6 0 L0 5 L6 10 Z" fill="#16181d"/></svg>
<svg style="left:1525.6px;top:325.4px" width="3" height="5.2" viewBox="0 0 6 10" preserveAspectRatio="none"><path d="M0 0 L6 5 L0 10 Z" fill="#16181d"/></svg>
<span style='left:381.7px;top:319px;height:14px;font:400 8.6px/14px "DejaVu Sans", "Liberation Sans", sans-serif;color:#50555d;letter-spacing:-0.09px;transform:scaleY(0.87);transform-origin:0 10px;'>Análisis</span>
<span style='left:484px;top:319px;height:14px;font:400 8.6px/14px "DejaVu Sans", "Liberation Sans", sans-serif;color:#50555d;letter-spacing:0.11px;transform:scaleY(0.87);transform-origin:0 10px;'>Controles Plan Tratamiento</span>
<div style="left:614.4px;top:319px;width:148px;height:16.3px;background:#f5821f;"></div>
<div style="left:617.5px;top:321.8px;width:141.9px;height:10.6px;background:#a9b9fb;"></div>
<span style='left:637.8px;top:320px;height:13px;font:700 8px/13px "DejaVu Sans", "Liberation Sans", sans-serif;color:#2a3890;letter-spacing:0.02px;transform:scaleY(0.87);transform-origin:0 9px;'>Controles Implantados</span>
<span style='left:808.7px;top:319px;height:14px;font:400 8.6px/14px "DejaVu Sans", "Liberation Sans", sans-serif;color:#50555d;letter-spacing:0.2px;transform:scaleY(0.87);transform-origin:0 10px;'>Indicadores</span>
<span style='left:941.95px;top:319px;height:14px;font:400 8.6px/14px "DejaVu Sans", "Liberation Sans", sans-serif;color:#50555d;letter-spacing:0.09px;transform:scaleY(0.87);transform-origin:0 10px;'>Tickets asociados</span>
<div style="left:315.6px;top:336px;width:1213px;height:18.3px;background:#d3dcdf;border-top:1px solid #c9d2da;box-sizing:border-box;"></div>
<svg style="left:322.8px;top:340.2px" width="11.7" height="9.2" viewBox="0 0 12 12" preserveAspectRatio="none"><path d="M6 0.5 V11.5 M0.5 6 H11.5" stroke="#3cae45" stroke-width="2.6" stroke-linecap="round"/></svg>
<span style='left:339.5px;top:339px;height:12px;font:400 7.8px/12px "DejaVu Sans", "Liberation Sans", sans-serif;color:#3c424a;letter-spacing:-0.12px;transform:scaleY(0.87);transform-origin:0 8px;'>Nuevo</span>
<svg style="left:374.5px;top:341.8px" width="10.7" height="8" viewBox="0 0 12 10" preserveAspectRatio="none"><path d="M2 1.7 L10 8.3 M10 1.7 L2 8.3" stroke="#e0181a" stroke-width="3" stroke-linecap="round"/></svg>
<span style='left:391.7px;top:339px;height:12px;font:400 7.8px/12px "DejaVu Sans", "Liberation Sans", sans-serif;color:#3c424a;letter-spacing:0.11px;transform:scaleY(0.87);transform-origin:0 8px;'>Desasociar</span>
<svg style="left:456.7px;top:339.7px" width="7.8" height="11.8" viewBox="0 0 8 13.2" preserveAspectRatio="none"><path d="M0.8 4.2 V9.4 A3.2 3.2 0 0 0 7.2 9.4 V3 A2.15 2.15 0 0 0 2.9 3 V9.2 A1.1 1.1 0 0 0 5.1 9.2 V4.4" fill="none" stroke="#343a46" stroke-width="1.35" stroke-linecap="round"/></svg>
<span style='left:471.7px;top:339px;height:12px;font:400 7.8px/12px "DejaVu Sans", "Liberation Sans", sans-serif;color:#3c424a;letter-spacing:0.1px;transform:scaleY(0.87);transform-origin:0 8px;'>Asociar Controles</span>
<svg style="left:560.6px;top:339.8px" width="11.8" height="10.1" viewBox="0 0 14 12" preserveAspectRatio="none"><path d="M1.6 7.6 A5.2 5.2 0 0 1 9.6 2" fill="none" stroke="#1b2033" stroke-width="1.5"/><path d="M8.2 0 L12.2 1.4 L9.4 4.8 Z" fill="#1b2033"/><path d="M12.4 4.4 A5.2 5.2 0 0 1 4.4 10" fill="none" stroke="#1b2033" stroke-width="1.5"/><path d="M5.8 12 L1.8 10.6 L4.6 7.2 Z" fill="#1b2033"/></svg>
<span style='left:577.2px;top:339px;height:12px;font:400 7.8px/12px "DejaVu Sans", "Liberation Sans", sans-serif;color:#3c424a;letter-spacing:0.16px;transform:scaleY(0.87);transform-origin:0 8px;'>Restaurar Valoración</span>
<svg style="left:680.3px;top:340.7px" width="9.2" height="9.2" viewBox="0 0 14 14.4" preserveAspectRatio="none"><path d="M4.3 0.2 H9.7 V5 H13.4 L7 11 L0.6 5 H4.3 Z" fill="#1b2033"/><rect x="0.3" y="12" width="13.4" height="2.2" fill="#1b2033"/></svg>
<span style='left:696.7px;top:339px;height:12px;font:400 7.8px/12px "DejaVu Sans", "Liberation Sans", sans-serif;color:#3c424a;letter-spacing:0.22px;transform:scaleY(0.87);transform-origin:0 8px;'>Descarga</span>
<svg style="left:742.1px;top:343.9px" width="5" height="3" viewBox="0 0 10 6" preserveAspectRatio="none"><path d="M0 0 H10 L5 6 Z" fill="#3d444d"/></svg>
<svg style="left:763.8px;top:340.4px" width="10.8" height="9.4" viewBox="0 0 16 16" preserveAspectRatio="none"><circle cx="6.5" cy="6.5" r="5" fill="none" stroke="#1b2033" stroke-width="1.9"/><path d="M10.4 10.4 L14.8 14.8" stroke="#1b2033" stroke-width="2.3" stroke-linecap="round"/></svg>
<span style='left:780.6px;top:339px;height:12px;font:400 7.8px/12px "DejaVu Sans", "Liberation Sans", sans-serif;color:#3c424a;letter-spacing:-0px;transform:scaleY(0.87);transform-origin:0 8px;'>Mostrar</span>
<svg style="left:818.9px;top:343.9px" width="5" height="3" viewBox="0 0 10 6" preserveAspectRatio="none"><path d="M0 0 H10 L5 6 Z" fill="#3d444d"/></svg>
<div style="left:315.6px;top:354px;width:1213px;height:39.6px;background:#f8fafb;"></div>
<div style="left:315.6px;top:372px;width:1213px;height:1.2px;background:#e6ebf0;"></div>
<div style="left:315.6px;top:393.2px;width:1213px;height:1.2px;background:#e6ebf0;"></div>
<div style="left:558.25px;top:354.3px;width:1.1px;height:39.3px;background:#e6eaef;"></div>
<div style="left:740.45px;top:354.3px;width:1.1px;height:39.3px;background:#e6eaef;"></div>
<div style="left:923.25px;top:354.3px;width:1.1px;height:39.3px;background:#e6eaef;"></div>
<div style="left:1105.45px;top:354.3px;width:1.1px;height:39.3px;background:#e6eaef;"></div>
<div style="left:1289.45px;top:354.3px;width:1.1px;height:39.3px;background:#e6eaef;"></div>
<div style="left:1472.15px;top:354.3px;width:1.1px;height:39.3px;background:#e6eaef;"></div>
<span style='left:420.49px;top:358px;height:12px;font:700 7.2px/12px "DejaVu Sans", "Liberation Sans", sans-serif;color:#2e3138;letter-spacing:0.12px;transform:scaleY(0.87);transform-origin:0 8px;'>Nombre</span>
<span style='left:640.49px;top:358px;height:12px;font:700 7.2px/12px "DejaVu Sans", "Liberation Sans", sans-serif;color:#2e3138;letter-spacing:0.12px;transform:scaleY(0.87);transform-origin:0 8px;'>Tipo</span>
<span style='left:817.28px;top:358px;height:12px;font:700 7.2px/12px "DejaVu Sans", "Liberation Sans", sans-serif;color:#2e3138;letter-spacing:0.12px;transform:scaleY(0.87);transform-origin:0 8px;'>Control</span>
<span style='left:1001px;top:358px;height:12px;font:700 7.2px/12px "DejaVu Sans", "Liberation Sans", sans-serif;color:#2e3138;letter-spacing:0.12px;transform:scaleY(0.87);transform-origin:0 8px;'>Acción</span>
<span style='left:1172.15px;top:358px;height:12px;font:700 7.2px/12px "DejaVu Sans", "Liberation Sans", sans-serif;color:#2e3138;letter-spacing:0.12px;transform:scaleY(0.87);transform-origin:0 8px;'>Responsable</span>
<span style='left:1344.38px;top:358px;height:12px;font:700 7.2px/12px "DejaVu Sans", "Liberation Sans", sans-serif;color:#2e3138;letter-spacing:0.12px;transform:scaleY(0.87);transform-origin:0 8px;'>Otro Responsable</span>
<div style="left:325.8px;top:378px;width:222.2px;height:11.4px;box-sizing:border-box;border:1px solid #b7c6dc;background:#fff;"></div>
<div style="left:568.6px;top:378px;width:162.6px;height:11.4px;box-sizing:border-box;border:1px solid #b2c3de;background:#fff;"></div>
<svg style="left:720.2px;top:381.8px" width="7.2" height="4.4" viewBox="0 0 10 6" preserveAspectRatio="none"><path d="M1 1.2 L5 5 L9 1.2" fill="none" stroke="#16181d" stroke-width="1.9"/></svg>
<div style="left:748.7px;top:378px;width:168px;height:11.4px;box-sizing:border-box;border:1px solid #b7c6dc;background:#fff;"></div>
<div style="left:931.7px;top:378px;width:167.7px;height:11.4px;box-sizing:border-box;border:1px solid #b7c6dc;background:#fff;"></div>
<div style="left:1113.7px;top:378px;width:167.9px;height:11.4px;box-sizing:border-box;border:1px solid #b7c6dc;background:#fff;"></div>
<div style="left:1297.3px;top:378px;width:167.5px;height:11.4px;box-sizing:border-box;border:1px solid #b7c6dc;background:#fff;"></div>
<div style="left:1480px;top:378px;width:80px;height:11.4px;box-sizing:border-box;border:1px solid #b7c6dc;background:#fff;"></div>
<div style="left:315.6px;top:410.15px;width:1213px;height:15.55px;background:#fafafa;"></div>
<div style="left:315.6px;top:441.25px;width:1213px;height:15.55px;background:#fafafa;"></div>
<div style="left:315.6px;top:409.6px;width:1213px;height:1.1px;background:#e7ebef;"></div>
<div style="left:315.6px;top:425.15px;width:1213px;height:1.1px;background:#e7ebef;"></div>
<div style="left:315.6px;top:440.7px;width:1213px;height:1.1px;background:#e7ebef;"></div>
<div style="left:315.6px;top:456.25px;width:1213px;height:1.1px;background:#e7ebef;"></div>
<div style="left:315.6px;top:471.8px;width:1213px;height:1.1px;background:#e7ebef;"></div>
<span style='left:343.4px;top:397px;height:12px;font:400 7.5px/12px "DejaVu Sans", "Liberation Sans", sans-serif;color:#363b42;letter-spacing:0.43px;transform:scaleY(0.87);transform-origin:0 8px;'>Formación</span>
<span style='left:560.8px;top:397px;height:12px;font:400 7.5px/12px "DejaVu Sans", "Liberation Sans", sans-serif;color:#363b42;letter-spacing:0.36px;transform:scaleY(0.87);transform-origin:0 8px;'>Control Implantado</span>
<span style='left:343.4px;top:413px;height:12px;font:400 7.5px/12px "DejaVu Sans", "Liberation Sans", sans-serif;color:#363b42;letter-spacing:0.44px;transform:scaleY(0.87);transform-origin:0 8px;'>Comité Compliance</span>
<span style='left:560.8px;top:413px;height:12px;font:400 7.5px/12px "DejaVu Sans", "Liberation Sans", sans-serif;color:#363b42;letter-spacing:0.36px;transform:scaleY(0.87);transform-origin:0 8px;'>Control Implantado</span>
<span style='left:343.4px;top:428px;height:12px;font:400 7.5px/12px "DejaVu Sans", "Liberation Sans", sans-serif;color:#363b42;letter-spacing:0.35px;transform:scaleY(0.87);transform-origin:0 8px;'>Canal de Denuncias</span>
<span style='left:560.8px;top:428px;height:12px;font:400 7.5px/12px "DejaVu Sans", "Liberation Sans", sans-serif;color:#363b42;letter-spacing:0.36px;transform:scaleY(0.87);transform-origin:0 8px;'>Control Implantado</span>
<span style='left:343.4px;top:444px;height:12px;font:400 7.5px/12px "DejaVu Sans", "Liberation Sans", sans-serif;color:#363b42;letter-spacing:0.26px;transform:scaleY(0.87);transform-origin:0 8px;'>Código Ético</span>
<span style='left:560.8px;top:444px;height:12px;font:400 7.5px/12px "DejaVu Sans", "Liberation Sans", sans-serif;color:#363b42;letter-spacing:0.36px;transform:scaleY(0.87);transform-origin:0 8px;'>Control Implantado</span>
<span style='left:343.4px;top:459px;height:12px;font:400 7.5px/12px "DejaVu Sans", "Liberation Sans", sans-serif;color:#363b42;letter-spacing:0.29px;transform:scaleY(0.87);transform-origin:0 8px;'>Políticas de cumplimiento</span>
<span style='left:560.8px;top:459px;height:12px;font:400 7.5px/12px "DejaVu Sans", "Liberation Sans", sans-serif;color:#363b42;letter-spacing:0.36px;transform:scaleY(0.87);transform-origin:0 8px;'>Control Implantado</span>
<div style="left:309px;top:61.8px;width:1226.4px;height:417px;box-sizing:border-box;border:solid #f79646;border-width:6px 6.8px 6.6px 6.6px;border-radius:5px 4px 4px 5px;"></div>
</div></body></html>
